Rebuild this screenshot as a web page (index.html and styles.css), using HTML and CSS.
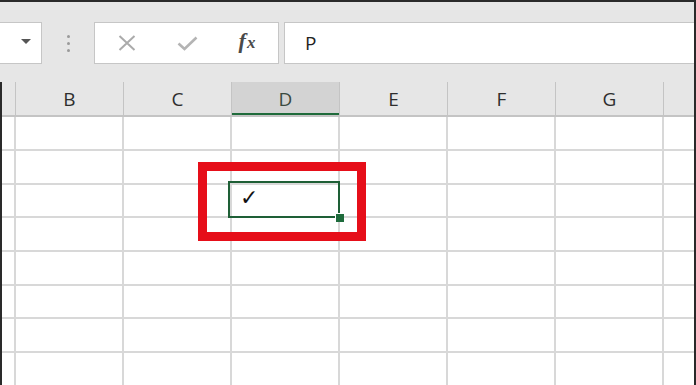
FILE: index.html
```html
<!DOCTYPE html>
<html>
<head>
<meta charset="utf-8">
<link rel="stylesheet" href="styles.css">
</head>
<body>
<div class="app">
  <div class="toolbar">
    <div class="namebox"><span class="arrow"></span></div>
    <div class="grip"><i></i><i></i><i></i></div>
    <div class="fbtns">
      <span class="slot">
        <svg width="18" height="16" viewBox="0 0 18 16"><path d="M1.5 1 L16.5 15 M16.5 1 L1.5 15" stroke="#ababab" stroke-width="2" fill="none"/></svg>
      </span>
      <span class="slot">
        <svg width="21" height="15" viewBox="0 0 21 15"><path d="M1.5 7.5 L7.5 13 L19.5 1.5" stroke="#b4b4b4" stroke-width="2.6" fill="none"/></svg>
      </span>
      <span class="slot"><span class="fx">f<span class="fx-x">x</span></span></span>
    </div>
    <div class="finput">P</div>
  </div>
  <div class="sheet">
    <div class="hrow">
      <div class="c c0"></div>
      <div class="c">B</div>
      <div class="c">C</div>
      <div class="c sel">D</div>
      <div class="c">E</div>
      <div class="c">F</div>
      <div class="c">G</div>
      <div class="c clast"></div>
    </div>
    <div class="row r34"><div class="c c0"></div><div class="c"></div><div class="c"></div><div class="c"></div><div class="c"></div><div class="c"></div><div class="c"></div><div class="c clast"></div></div>
    <div class="row r34"><div class="c c0"></div><div class="c"></div><div class="c"></div><div class="c"></div><div class="c"></div><div class="c"></div><div class="c"></div><div class="c clast"></div></div>
    <div class="row r33"><div class="c c0"></div><div class="c"></div><div class="c"></div><div class="c mark">✓</div><div class="c"></div><div class="c"></div><div class="c"></div><div class="c clast"></div></div>
    <div class="row r34"><div class="c c0"></div><div class="c"></div><div class="c"></div><div class="c"></div><div class="c"></div><div class="c"></div><div class="c"></div><div class="c clast"></div></div>
    <div class="row r34"><div class="c c0"></div><div class="c"></div><div class="c"></div><div class="c"></div><div class="c"></div><div class="c"></div><div class="c"></div><div class="c clast"></div></div>
    <div class="row r33"><div class="c c0"></div><div class="c"></div><div class="c"></div><div class="c"></div><div class="c"></div><div class="c"></div><div class="c"></div><div class="c clast"></div></div>
    <div class="row r34"><div class="c c0"></div><div class="c"></div><div class="c"></div><div class="c"></div><div class="c"></div><div class="c"></div><div class="c"></div><div class="c clast"></div></div>
    <div class="row r34"><div class="c c0"></div><div class="c"></div><div class="c"></div><div class="c"></div><div class="c"></div><div class="c"></div><div class="c"></div><div class="c clast"></div></div>
  </div>
  <div class="selection"><span class="handle"></span></div>
  <div class="highlight"></div>
</div>
</body>
</html>
```
FILE: styles.css
```css
html, body {
  margin: 0;
  padding: 0;
  width: 696px;
  height: 385px;
  overflow: hidden;
  background: #ffffff;
}
.app {
  position: relative;
  width: 696px;
  height: 385px;
  box-sizing: border-box;
  border-top: 2px solid #2a2a2a;
  border-right: 2px solid #2a2a2a;
  background: #ffffff;
  overflow: hidden;
  font-family: "Open Sans", "Noto Sans", sans-serif;
}
.toolbar {
  display: flex;
  align-items: flex-start;
  height: 80px;
  box-sizing: border-box;
  padding-top: 20px;
  background: #e6e6e6;
}
.namebox {
  width: 43px;
  height: 42px;
  margin-left: -1px;
  box-sizing: border-box;
  border: 1px solid #c6c6c6;
  background: #ffffff;
  display: flex;
  align-items: center;
  justify-content: flex-end;
  padding-right: 10px;
}
.arrow {
  width: 0;
  height: 0;
  border-left: 5px solid transparent;
  border-right: 5px solid transparent;
  border-top: 5px solid #555555;
  margin-top: -4px;
}
.grip {
  width: 52px;
  height: 42px;
  display: flex;
  flex-direction: column;
  align-items: center;
  justify-content: center;
  gap: 4px;
}
.grip i {
  display: block;
  width: 3px;
  height: 3px;
  border-radius: 50%;
  background: #9a9a9a;
}
.fbtns {
  width: 185px;
  height: 42px;
  box-sizing: border-box;
  border: 1px solid #c6c6c6;
  background: #ffffff;
  display: flex;
  align-items: center;
  padding-left: 2px;
}
.slot {
  width: 60px;
  display: flex;
  justify-content: center;
  align-items: center;
}
.fx {
  display: block;
  font-family: "Liberation Serif", "DejaVu Serif", serif;
  font-style: italic;
  font-weight: bold;
  font-size: 22px;
  line-height: 24px;
  color: #4a4a4a;
  margin-top: -3px;
}
.fx-x {
  font-size: 17px;
  margin-left: 1px;
}
.finput {
  flex: 1;
  height: 42px;
  margin-left: 5px;
  box-sizing: border-box;
  border: 1px solid #c6c6c6;
  border-right: none;
  background: #ffffff;
  padding-left: 20px;
  font-size: 19px;
  line-height: 40px;
  color: #222222;
}
.sheet {
  border-left: 2px solid #2a2a2a;
}
.hrow, .row {
  display: flex;
}
.hrow {
  height: 35px;
  box-sizing: border-box;
  background: #e6e6e6;
  border-bottom: 2px solid #c4c4c4;
}
.hrow .c {
  height: 33px;
  border-right: 1px solid #c4c4c4;
  display: flex;
  align-items: center;
  justify-content: center;
  font-size: 19px;
  color: #2e2e2e;
}
.c {
  width: 108px;
  flex: none;
  box-sizing: border-box;
  border-right: 2px solid #d8d8d8;
}
.hrow .c0, .row .c0 {
  width: 14px;
}
.c.clast {
  flex: 1;
  border-right: none;
}
.hrow .sel {
  background: #d3d3d3;
  box-shadow: inset 0 -2px 0 #1f6b3b;
  color: #3b4a40;
}
.row {
  box-sizing: border-box;
  border-bottom: 2px solid #d8d8d8;
}
.row .c {
  height: 100%;
}
.r34 { height: 34px; }
.r33 { height: 33px; }
.mark {
  font-family: "DejaVu Sans", sans-serif;
  font-size: 22px;
  color: #111111;
  padding-left: 8px;
  line-height: 26px;
}
.selection {
  position: absolute;
  left: 228px;
  top: 179px;
  width: 112px;
  height: 37px;
  box-sizing: border-box;
  border: 2px solid #1e5f36;
}
.handle {
  position: absolute;
  right: -6px;
  bottom: -6px;
  width: 8px;
  height: 8px;
  background: #1e6b3c;
  border: 1px solid #ffffff;
  border-right: none;
  border-bottom: none;
}
.highlight {
  position: absolute;
  left: 198px;
  top: 160px;
  width: 168px;
  height: 79px;
  box-sizing: border-box;
  border: 9px solid #e60e19;
}
```
